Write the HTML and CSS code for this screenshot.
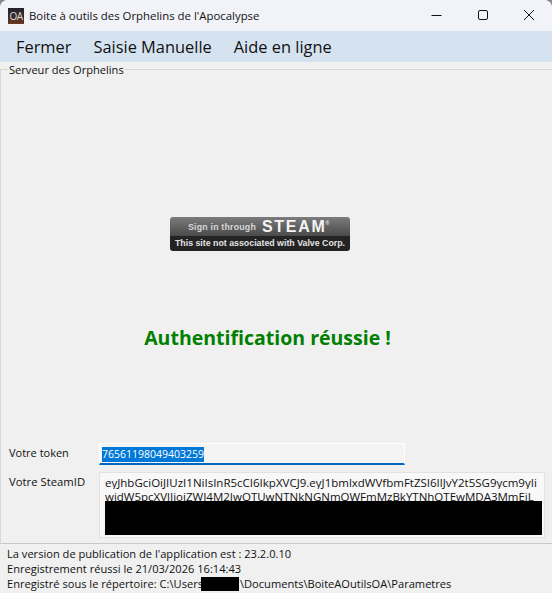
FILE: index.html
```html
<!DOCTYPE html>
<html lang="fr">
<head>
  <meta charset="UTF-8" />
  <title>Boite à outils des Orphelins de l'Apocalypse</title>
  <link rel="stylesheet" href="styles.css">
</head>
<body>
  <div class="window">
    <div class="titlebar">
      <div class="appicon">OA</div>
      <div class="title">Boite à outils des Orphelins de l'Apocalypse</div>
      <div class="winbtns">
        <svg width="46" height="31" viewBox="0 0 46 31"><path d="M17.5 15.5h10" stroke="#111" fill="none"/></svg>
        <svg width="46" height="31" viewBox="0 0 46 31"><rect x="18.5" y="10.5" width="9" height="9" rx="1.5" stroke="#111" fill="none"/></svg>
        <svg width="46" height="31" viewBox="0 0 46 31"><path d="M18 10l10 10M28 10l-10 10" stroke="#111" fill="none"/></svg>
      </div>
    </div>

    <div class="menu">
      <span>Fermer</span>
      <span>Saisie Manuelle</span>
      <span>Aide en ligne</span>
    </div>

    <fieldset class="group">
      <legend>Serveur des Orphelins</legend>

      <div class="steam">
        <div class="steam-top">
          <span class="steam-sign">Sign in through</span>
          <span class="steam-name">STEAM</span>
          <span class="steam-reg">®</span>
        </div>
        <div class="steam-bottom">This site not associated with Valve Corp.</div>
      </div>

      <div class="success">Authentification réussie !</div>

      <div class="row row-token">
        <label class="label-token">Votre token</label>
        <div class="token"><span class="selected">76561198049403259</span></div>
      </div>

      <div class="row">
        <label>Votre SteamID</label>
        <div class="steamid">
          <div class="line">eyJhbGciOiJIUzI1NiIsInR5cCI6IkpXVCJ9.eyJ1bmlxdWVfbmFtZSI6IlJvY2t5SG9ycm9yIi</div>
          <div class="line">widW5pcXVlIjoiZWI4M2IwOTUwNTNkNGNmOWFmMzBkYTNhOTEwMDA3MmEiL</div>
          <div class="redact"></div>
        </div>
      </div>
    </fieldset>

    <div class="status">
      <div>La version de publication de l'application est : 23.2.0.10</div>
      <div>Enregistrement réussi le 21/03/2026 16:14:43</div>
      <div>Enregistré sous le répertoire: C:\Users<span class="hidden-name"></span>\Documents\BoiteAOutilsOA\Parametres</div>
    </div>
  </div>
</body>
</html>
```

FILE: styles.css
```css
* {
  box-sizing: border-box;
}

html, body {
  margin: 0;
  height: 100%;
  background-color: #8a8a8a;
}

body {
  font-family: 'Open Sans', 'Noto Sans', sans-serif;
  font-size: 11.5px;
  color: #111;
  overflow: hidden;
}

.window {
  width: 552px;
  height: 593px;
  background-color: #f0f0f0;
  border-radius: 8px 8px 0 0;
  overflow: hidden;
  display: flex;
  flex-direction: column;
}

.titlebar {
  height: 31px;
  flex: none;
  display: flex;
  align-items: center;
  padding-left: 8px;
  background-color: #f2f3f9;
}

.appicon {
  width: 16px;
  height: 16px;
  background: linear-gradient(#23232d, #3c2a28 55%, #6e3a1e);
  color: #ddd;
  font-size: 10px;
  line-height: 17px;
  text-align: center;
  letter-spacing: -0.5px;
}

.title {
  margin-left: 5px;
  font-size: 11.4px;
  flex: 1;
}

.winbtns {
  display: flex;
  height: 31px;
}

.winbtns svg {
  display: block;
}

.menu {
  height: 31px;
  flex: none;
  display: flex;
  align-items: center;
  gap: 22px;
  padding-left: 16px;
  background-color: #d5e3f1;
  font-size: 16.4px;
}

.group {
  flex: none;
  height: 482px;
  margin: 0;
  padding: 0 6px 0 8px;
  border: 0;
  border-top: 1px solid #d8d8d8;
  border-left: 1px solid #d8d8d8;
  border-bottom: 1px solid #c8c8c8;
}

.group legend {
  padding: 0 1px;
  margin-left: -1px;
  font-size: 11.1px;
  line-height: 15px;
}

.steam {
  width: 180px;
  height: 34px;
  margin: 140px 0 0 161px;
  border-radius: 3px;
  overflow: hidden;
  color: #e4e4e4;
  font-family: 'Liberation Sans', sans-serif;
  font-weight: bold;
}

.steam-top {
  height: 19px;
  display: flex;
  align-items: center;
  gap: 6px;
  padding-left: 18px;
  background: linear-gradient(#7c7c7c, #4a4a4a);
}

.steam-sign {
  font-size: 8.8px;
  letter-spacing: 0.2px;
  color: #d8d8d8;
}

.steam-name {
  font-size: 16px;
  letter-spacing: 1.7px;
  color: #f4f4f4;
}

.steam-reg {
  font-size: 5px;
  margin: -8px 0 0 -7px;
}

.steam-bottom {
  height: 15px;
  line-height: 14px;
  font-size: 8.8px;
  text-align: center;
  background-color: #232323;
}

.success {
  margin: 73px 0 0 0;
  height: 28px;
  line-height: 28px;
  text-align: center;
  padding-right: 20px;
  font-size: 19.5px;
  font-weight: bold;
  color: #008000;
}

.row {
  display: flex;
  margin-top: 7px;
}

.row-token {
  margin-top: 91px;
}

.row label {
  width: 91px;
  flex: none;
  line-height: 20px;
  font-size: 11.3px;
}

.row .label-token {
  font-size: 11px;
}

.token {
  width: 306px;
  height: 22px;
  padding: 2px 0 0 2px;
  margin-left: -1px;
  background-color: #f4f4f4;
  border: 1px solid #fff;
  border-bottom: 2px solid #0067c0;
}

.selected {
  display: inline-block;
  height: 15px;
  line-height: 15px;
  font-size: 10.5px;
  background-color: #0078d7;
  color: #fff;
}

.steamid {
  width: 446px;
  height: 66px;
  margin-left: -1px;
  padding: 2px 0 0 5px;
  background-color: #f8f8f8;
  border: 1px solid #e2e2e2;
  position: relative;
  overflow: hidden;
}

.line {
  line-height: 15px;
  height: 14px;
  white-space: nowrap;
  overflow: hidden;
}

.line + .line {
  height: 15px;
}

.redact {
  position: absolute;
  left: 5px;
  top: 28px;
  width: 437px;
  height: 34px;
  background-color: #000;
}

.status {
  flex: 1;
  padding: 2px 0 0 7px;
  line-height: 15px;
  font-size: 11.1px;
}

.hidden-name {
  display: inline-block;
  width: 38px;
  height: 14px;
  margin: 0 1px -3px -2px;
  background-color: #000;
}
```
